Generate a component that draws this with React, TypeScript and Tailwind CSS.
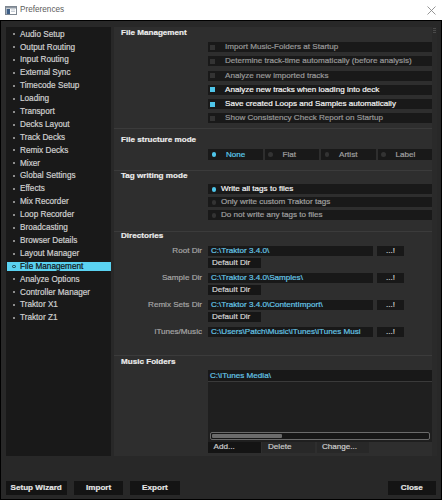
import React from "react";

const NAV = [
  "Audio Setup",
  "Output Routing",
  "Input Routing",
  "External Sync",
  "Timecode Setup",
  "Loading",
  "Transport",
  "Decks Layout",
  "Track Decks",
  "Remix Decks",
  "Mixer",
  "Global Settings",
  "Effects",
  "Mix Recorder",
  "Loop Recorder",
  "Broadcasting",
  "Browser Details",
  "Layout Manager",
  "File Management",
  "Analyze Options",
  "Controller Manager",
  "Traktor X1",
  "Traktor Z1",
];

const CHECKS: [string, boolean][] = [
  ["Import Music-Folders at Startup", false],
  ["Determine track-time automatically (before analysis)", false],
  ["Analyze new imported tracks", false],
  ["Analyze new tracks when loading into deck", true],
  ["Save created Loops and Samples automatically", true],
  ["Show Consistency Check Report on Startup", false],
];

const STRUCTURE = ["None", "Flat", "Artist", "Label"];

const TAGS = [
  "Write all tags to files",
  "Only write custom Traktor tags",
  "Do not write any tags to files",
];

function SectionTitle({ children }: { children: React.ReactNode }) {
  return (
    <div className="h-[8px] leading-[8px] pl-[7px] text-[8.1px] font-bold text-[#ececec]">
      {children}
    </div>
  );
}

function Divider({ className }: { className: string }) {
  return <div className={`h-px bg-[#3b3b3b] ${className}`} />;
}

function DirRow({
  label,
  path,
  withDefault,
  className,
}: {
  label: string;
  path: string;
  withDefault: boolean;
  className: string;
}) {
  return (
    <div className={className}>
      <div className="flex h-[10px] items-center">
        <div className="w-[89px] pr-[1px] text-right text-[8.1px] leading-[10px] text-[#a6a6a6]">
          {label}
        </div>
        <div className="ml-[5px] h-[10px] w-[165px] overflow-hidden whitespace-nowrap bg-[#181818] pl-[3px] text-[8.1px] leading-[10px] text-[#66c6e6]">
          {path}
        </div>
        <div className="ml-[4px] h-[10px] w-[27px] bg-[#181818] text-center text-[8.1px] leading-[10px] text-[#cfcfcf]">
          ...!
        </div>
      </div>
      {withDefault && (
        <div className="ml-[94px] mt-[2px] h-[10px] w-[53px] bg-[#161616] pl-[4px] text-[8.1px] leading-[10px] text-[#d4d4d4]">
          Default Dir
        </div>
      )}
    </div>
  );
}

function WindowIcon() {
  return (
    <svg width="12" height="9" viewBox="0 0 12 9">
      <rect x="0.5" y="0.5" width="11" height="8" fill="#ffffff" stroke="#7d8690" />
      <rect x="1" y="1" width="10" height="1.5" fill="#8e97a2" />
      <rect x="1.5" y="3" width="3.5" height="5" fill="#3f5f86" />
      <rect x="6" y="3.5" width="4" height="0.8" fill="#b9c2cc" />
      <rect x="6" y="5.2" width="4" height="0.8" fill="#b9c2cc" />
    </svg>
  );
}

export default function App() {
  return (
    <div className="h-[500px] w-[442px] overflow-hidden bg-white font-['Liberation_Sans',Arial,sans-serif]">
      {/* title bar */}
      <div className="flex h-[20px] items-center bg-white pl-[5px] pr-[6px]">
        <WindowIcon />
        <span className="ml-[3px] text-[8.2px] text-[#5c5c5c]">Preferences</span>
        <svg className="ml-auto" width="9" height="9" viewBox="0 0 9 9">
          <path d="M0.5 0.5 L8.5 8.5 M8.5 0.5 L0.5 8.5" stroke="#8a8a8a" strokeWidth="0.9" fill="none" />
        </svg>
      </div>

      {/* dialog body */}
      <div className="h-[480px] border border-black bg-[#282828] [-webkit-text-stroke:0.2px]">
        <div className="flex h-[435px] pl-[5px] pt-[6px]">
          {/* category list */}
          <div className="h-[429px] w-[105px] bg-[#191919] pt-[1px]">
            {NAV.map((item) => {
              const active = item === "File Management";
              return (
                <div key={item} className="flex h-[12.9px] items-center pl-[1px]">
                  <div
                    className={`flex h-[9.5px] w-full items-center ${
                      active ? "bg-[#5ad2f1] text-[#111]" : "text-[#cfcfcf]"
                    }`}
                  >
                    <div className="flex w-[13px] justify-center pl-[1px]">
                      {active ? (
                        <div className="h-[3.5px] w-[3.5px] rounded-full border border-[#1c3a44]" />
                      ) : (
                        <div className="h-[2px] w-[2px] bg-[#8c8c8c]" />
                      )}
                    </div>
                    <span className="text-[8.2px] leading-[9.5px]">{item}</span>
                  </div>
                </div>
              );
            })}
          </div>

          {/* settings page */}
          <div className="relative ml-[3px] h-[429px] w-[323px] bg-[#2e2e2e] pt-[2px]">
            {/* scrollbar strip */}
            <div className="absolute right-0 top-0 h-full w-[5px] bg-[#2a2a2a]">
              <div className="mx-auto mt-[1px] flex w-[3px] flex-col gap-[1px]">
                <div className="h-px bg-[#4a4a4a]" />
                <div className="h-px bg-[#4a4a4a]" />
                <div className="h-px bg-[#4a4a4a]" />
              </div>
            </div>

            <SectionTitle>File Management</SectionTitle>
            <div className="ml-[94px] mt-[5px] flex w-[224px] flex-col gap-[4.3px]">
              {CHECKS.map(([label, on]) => (
                <div key={label} className="flex h-[10px] items-center bg-[#191919]">
                  <div
                    className={`ml-[2px] h-[5px] w-[5px] ${on ? "bg-[#4fc6ea]" : "bg-[#333333]"}`}
                  />
                  <span
                    className={`ml-[10px] whitespace-nowrap text-[8.1px] leading-[10px] ${
                      on ? "text-[#f6f6f6]" : "text-[#9a9a9a]"
                    }`}
                  >
                    {label}
                  </span>
                </div>
              ))}
            </div>
            <Divider className="mt-[4.5px]" />

            <div className="mt-[7px]">
              <SectionTitle>File structure mode</SectionTitle>
            </div>
            <div className="ml-[94px] mt-[5px] grid h-[11px] w-[224px] grid-cols-4 gap-[2px]">
              {STRUCTURE.map((label, i) => (
                <div key={label} className="flex items-center bg-[#191919]">
                  <div
                    className={`ml-[3.5px] h-[4.5px] w-[4.5px] rounded-full ${
                      i === 0 ? "bg-[#4fc6ea]" : "bg-[#333333]"
                    }`}
                  />
                  <span
                    className={`ml-[10px] text-[8.1px] leading-[11px] ${
                      i === 0 ? "text-[#5ccbec]" : "text-[#a0a0a0]"
                    }`}
                  >
                    {label}
                  </span>
                </div>
              ))}
            </div>
            <Divider className="mt-[10px]" />

            <div className="mt-[1px]">
              <SectionTitle>Tag writing mode</SectionTitle>
            </div>
            <div className="ml-[94px] mt-[4.3px] flex w-[224px] flex-col gap-[3px]">
              {TAGS.map((label, i) => (
                <div key={label} className="flex h-[10px] items-center bg-[#191919]">
                  <div
                    className={`ml-[3.5px] h-[4.5px] w-[4.5px] rounded-full ${
                      i === 0 ? "bg-[#4fc6ea]" : "bg-[#333333]"
                    }`}
                  />
                  <span
                    className={`ml-[5px] text-[8.1px] leading-[10px] ${
                      i === 0 ? "text-[#f4f4f4]" : "text-[#a0a0a0]"
                    }`}
                  >
                    {label}
                  </span>
                </div>
              ))}
            </div>
            <Divider className="mt-[10.7px]" />

            <SectionTitle>Directories</SectionTitle>
            <DirRow className="mt-[6.3px]" label="Root Dir" path="C:\Traktor 3.4.0\" withDefault />
            <DirRow className="mt-[5px]" label="Sample Dir" path="C:\Traktor 3.4.0\Samples\" withDefault />
            <DirRow
              className="mt-[5px]"
              label="Remix Sets Dir"
              path="C:\Traktor 3.4.0\ContentImport\"
              withDefault
            />
            <DirRow
              className="mt-[5px]"
              label="iTunes/Music"
              path="C:\Users\Patch\Music\iTunes\iTunes Musi"
              withDefault={false}
            />
            <Divider className="mt-[17.7px]" />

            <div className="mt-[1.7px]">
              <SectionTitle>Music Folders</SectionTitle>
            </div>
            <div className="ml-[94px] mt-[4.6px] w-[224px]">
              <div className="flex h-[72px] flex-col bg-[#1f1f1f]">
                <div className="h-[11.5px] border-b border-[#3a3a3a] bg-[#181818] pl-[2px] text-[8.1px] leading-[11px] text-[#66c6e6]">
                  C:\iTunes Media\
                </div>
                <div className="flex-1" />
                <div className="mx-[2px] mb-[2.5px] h-[7.5px] rounded-[2px] border border-[#6a6a6a] bg-[#161616] p-px">
                  <div className="h-full w-[70px] rounded-[1px] bg-[#6b6b6b]" />
                </div>
              </div>
              <div className="flex h-[10.6px] text-[8.1px] leading-[10.6px] text-[#cccccc]">
                <div className="w-[53px] bg-[#141414] pl-[5.5px]">Add...</div>
                <div className="ml-px w-[53px] bg-[#282828] pl-[6px]">Delete</div>
                <div className="ml-[2px] w-[52px] bg-[#282828] pl-[5px]">Change...</div>
              </div>
            </div>
          </div>
        </div>

        {/* dialog buttons */}
        <div className="mt-[25px] flex h-[13.5px] pl-[4.7px] pr-[5px] text-[8.1px] font-bold leading-[13.5px] text-[#e6e6e6]">
          <div className="w-[61px] bg-[#141414] text-center">Setup Wizard</div>
          <div className="ml-[7.3px] w-[49.3px] bg-[#141414] text-center">Import</div>
          <div className="ml-[7px] w-[49.3px] bg-[#141414] text-center">Export</div>
          <div className="ml-auto w-[48.3px] bg-[#141414] text-center">Close</div>
        </div>
      </div>
    </div>
  );
}
